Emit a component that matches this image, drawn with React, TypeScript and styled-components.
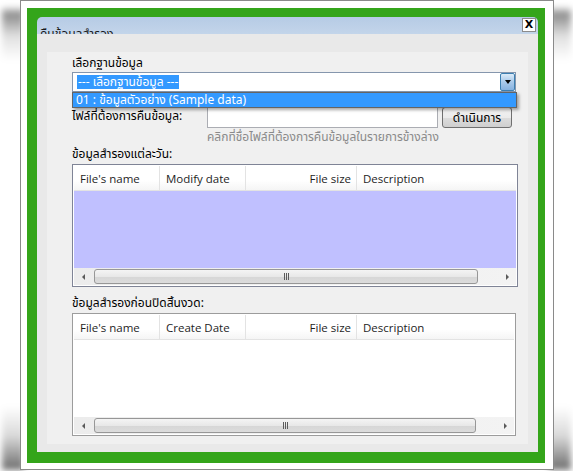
import * as React from 'react'
import styled, { createGlobalStyle } from 'styled-components'

const GlobalStyle = createGlobalStyle`
  html, body {
    margin: 0;
    padding: 0;
    background: #ffffff;
  }
  body {
    font-family: Tahoma, "Noto Sans Thai", "Noto Sans", "Liberation Sans", sans-serif;
    font-size: 12px;
    color: #000;
  }
`

type Column = { title: string; width?: number; align?: 'left' | 'right' }

const dailyColumns: Column[] = [
  { title: "File's name", width: 86 },
  { title: 'Modify date', width: 86 },
  { title: 'File size', width: 111, align: 'right' },
  { title: 'Description' },
]

const periodColumns: Column[] = [
  { title: "File's name", width: 86 },
  { title: 'Create Date', width: 86 },
  { title: 'File size', width: 111, align: 'right' },
  { title: 'Description' },
]

const BackupTable = ({ columns, fill, width, border }: { columns: Column[]; fill: string; width: number; border: string }) => (
  <TableBox $width={width} $border={border}>
    <HeaderRow>
      {columns.map((c) => (
        <HeaderCell key={c.title} $width={c.width} $align={c.align}>
          {c.title}
        </HeaderCell>
      ))}
    </HeaderRow>
    <TableBody $fill={fill} />
    <ScrollBar>
      <ArrowCell>
        <ArrowLeft />
      </ArrowCell>
      <Thumb>
        <Grip />
      </Thumb>
      <ArrowCell>
        <ArrowRight />
      </ArrowCell>
    </ScrollBar>
  </TableBox>
)

const App = () => {
  return (
    <Page>
      <GlobalStyle />
      <Shadow $side="left" />
      <Shadow $side="right" />
      <Frame>
        <GreenBorder>
          <Window>
            <TitleBar>
              <Title>คืนข้อมูลสำรอง</Title>
              <CloseButton>X</CloseButton>
            </TitleBar>
            <WindowBody>
              <Panel>
                <Label>เลือกฐานข้อมูล</Label>
                <Combo>
                  <Selected>--- เลือกฐานข้อมูล ---</Selected>
                  <DropButton>
                    <ArrowDown />
                  </DropButton>
                  <DropList>
                    <DropItem>01 : ข้อมูลตัวอย่าง (Sample data)</DropItem>
                  </DropList>
                </Combo>
                <FileRow>
                  <RowLabel>ไฟล์ที่ต้องการคืนข้อมูล:</RowLabel>
                  <TextBox />
                  <ActionButton>ดำเนินการ</ActionButton>
                </FileRow>
                <Hint>คลิกที่ชื่อไฟล์ที่ต้องการคืนข้อมูลในรายการข้างล่าง</Hint>
                <SectionLabel>ข้อมูลสำรองแต่ละวัน:</SectionLabel>
                <BackupTable columns={dailyColumns} fill="#c0c0ff" width={446} border="#7f8496" />
                <SectionLabel $gap={8}>ข้อมูลสำรองก่อนปิดสิ้นงวด:</SectionLabel>
                <BackupTable columns={periodColumns} fill="#ffffff" width={444} border="#9c9c9c" />
              </Panel>
            </WindowBody>
          </Window>
        </GreenBorder>
      </Frame>
    </Page>
  )
}

export default App

const Page = styled.div`
  position: relative;
  width: 573px;
  height: 471px;
  overflow: hidden;
`

const Shadow = styled.div<{ $side: 'left' | 'right' }>`
  position: absolute;
  top: 6px;
  width: 22px;
  height: 464px;
  ${(p) => (p.$side === 'left' ? 'left: 2px;' : 'left: 549px;')}
  background: linear-gradient(
    to bottom,
    transparent 0px,
    rgba(0, 0, 0, 0.45) 8px,
    rgba(0, 0, 0, 0.12) 30px,
    transparent 55px,
    transparent 400px,
    rgba(0, 0, 0, 0.15) 430px,
    rgba(0, 0, 0, 0.55) 462px
  );
  filter: blur(3px);
`

const Frame = styled.div`
  position: relative;
  margin-left: 20px;
  width: 534px;
  height: 470px;
  box-sizing: border-box;
  border: 1px solid #8a8a8a;
  background: #ffffff;
  padding: 7px 8px 6px 6px;
  display: flex;
`

const GreenBorder = styled.div`
  flex: 1;
  background: #34a51a;
  padding: 9px 7px 11px 10px;
  display: flex;
`

const Window = styled.div`
  flex: 1;
  display: flex;
  flex-direction: column;
  border-radius: 5px 5px 0 0;
  overflow: hidden;
`

const TitleBar = styled.div`
  height: 17px;
  flex: none;
  display: flex;
  align-items: flex-start;
  justify-content: space-between;
  overflow: hidden;
  background: linear-gradient(to bottom, #b6cbe5, #c3d5ea);
  padding: 0 2px 0 3px;
`

const Title = styled.div`
  margin-top: 10px;
  font-size: 12px;
  line-height: 14px;
  color: #1a1a1a;
`

const CloseButton = styled.div`
  margin-top: 1px;
  width: 14px;
  height: 14px;
  box-sizing: border-box;
  border: 1px solid #8c8c8c;
  background: #ffffff;
  font-family: "DejaVu Sans", sans-serif;
  font-weight: bold;
  font-size: 11px;
  line-height: 12px;
  text-align: center;
`

const WindowBody = styled.div`
  flex: 1;
  background: #e9e9e9;
  padding: 18px 10px 8px 10px;
  display: flex;
`

const Panel = styled.div`
  flex: 1;
  background: #f0f0f0;
  padding: 2px 0 0 25px;
  display: flex;
  flex-direction: column;
`

const Label = styled.div`
  height: 18px;
  line-height: 18px;
  font-size: 12px;
`

const Combo = styled.div`
  position: relative;
  width: 444px;
  height: 20px;
  box-sizing: border-box;
  border: 1px solid #8596ad;
  background: #ffffff;
  display: flex;
  align-items: center;
  padding-left: 4px;
`

const Selected = styled.span`
  background: #3399ff;
  color: #ffffff;
  line-height: 14px;
  padding: 0 1px;
`

const DropButton = styled.div`
  margin-left: auto;
  width: 15px;
  height: 18px;
  box-sizing: border-box;
  border: 1px solid #3c7fb1;
  border-radius: 2px;
  background: linear-gradient(to bottom, #dcebf8, #a8c9ea 50%, #86b2e0);
  display: flex;
  align-items: center;
  justify-content: center;
`

const ArrowDown = styled.span`
  width: 0;
  height: 0;
  border-left: 3px solid transparent;
  border-right: 3px solid transparent;
  border-top: 4px solid #000;
`

const DropList = styled.div`
  position: absolute;
  left: -1px;
  top: 19px;
  width: 445px;
  height: 16px;
  box-sizing: border-box;
  border: 1px solid #646464;
  background: #3399ff;
  box-shadow: 2px 2px 3px rgba(0, 0, 0, 0.35);
  z-index: 2;
`

const DropItem = styled.div`
  color: #ffffff;
  line-height: 14px;
  padding-left: 3px;
  font-size: 12px;
`

const FileRow = styled.div`
  margin-top: 12px;
  height: 24px;
  display: flex;
  align-items: flex-end;
`

const RowLabel = styled.div`
  width: 135px;
  line-height: 16px;
  padding-bottom: 4px;
`

const TextBox = styled.div`
  width: 231px;
  height: 22px;
  box-sizing: border-box;
  border: 1px solid #abadb3;
  border-top-color: #8f939b;
  background: #ffffff;
`

const ActionButton = styled.div`
  margin-left: 4px;
  width: 70px;
  height: 21px;
  box-sizing: border-box;
  border: 1px solid #707070;
  border-radius: 3px;
  background: linear-gradient(to bottom, #f2f2f2, #ebebeb 50%, #dddddd 51%, #cfcfcf);
  display: flex;
  align-items: center;
  justify-content: center;
  font-size: 12px;
`

const Hint = styled.div`
  margin-top: 1px;
  padding-left: 135px;
  line-height: 16px;
  color: #8a8a8a;
`

const SectionLabel = styled.div<{ $gap?: number }>`
  margin-top: ${(p) => p.$gap ?? 1}px;
  height: 17px;
  line-height: 17px;
`

const TableBox = styled.div<{ $width: number; $border: string }>`
  margin-top: 1px;
  width: ${(p) => p.$width}px;
  height: 123px;
  box-sizing: border-box;
  border: 1px solid ${(p) => p.$border};
  background: #ffffff;
  display: flex;
  flex-direction: column;
  padding: 1px;
`

const HeaderRow = styled.div`
  height: 24px;
  flex: none;
  display: flex;
  border-bottom: 1px solid #e3e3e3;
  background: linear-gradient(to bottom, #ffffff 60%, #f5f5f5);
  font-family: "Open Sans", "Noto Sans", sans-serif;
  font-size: 11.5px;
  color: #1e1e1e;
`

const HeaderCell = styled.div<{ $width?: number; $align?: 'left' | 'right' }>`
  ${(p) => (p.$width ? `width: ${p.$width}px; flex: none;` : 'flex: 1;')}
  box-sizing: border-box;
  border-right: 1px solid #e3e3e3;
  padding: 1px 5px 0 6px;
  display: flex;
  align-items: center;
  justify-content: ${(p) => (p.$align === 'right' ? 'flex-end' : 'flex-start')};
  &:last-child {
    border-right: none;
  }
`

const TableBody = styled.div<{ $fill: string }>`
  flex: 1;
  background: ${(p) => p.$fill};
`

const ScrollBar = styled.div`
  height: 17px;
  flex: none;
  display: flex;
  align-items: center;
  background: linear-gradient(to right, #ececec, #f3f3f3);
`

const ArrowCell = styled.div`
  width: 18px;
  height: 17px;
  display: flex;
  align-items: center;
  justify-content: center;
`

const ArrowLeft = styled.span`
  width: 0;
  height: 0;
  border-top: 3px solid transparent;
  border-bottom: 3px solid transparent;
  border-right: 3px solid #5a5a5a;
`

const ArrowRight = styled.span`
  width: 0;
  height: 0;
  border-top: 3px solid transparent;
  border-bottom: 3px solid transparent;
  border-left: 3px solid #5a5a5a;
`

const Thumb = styled.div`
  flex: 1;
  margin: 0 20px 0 2px;
  height: 15px;
  box-sizing: border-box;
  border: 1px solid #979797;
  border-radius: 3px;
  background: linear-gradient(to bottom, #f4f4f4, #e8e8e8 50%, #d6d6d6 51%, #dcdcdc);
  display: flex;
  align-items: center;
  justify-content: center;
`

const Grip = styled.span`
  width: 1px;
  height: 7px;
  margin-right: 4px;
  background: #5c5c5c;
  box-shadow: 2px 0 #5c5c5c, 4px 0 #5c5c5c;
`
